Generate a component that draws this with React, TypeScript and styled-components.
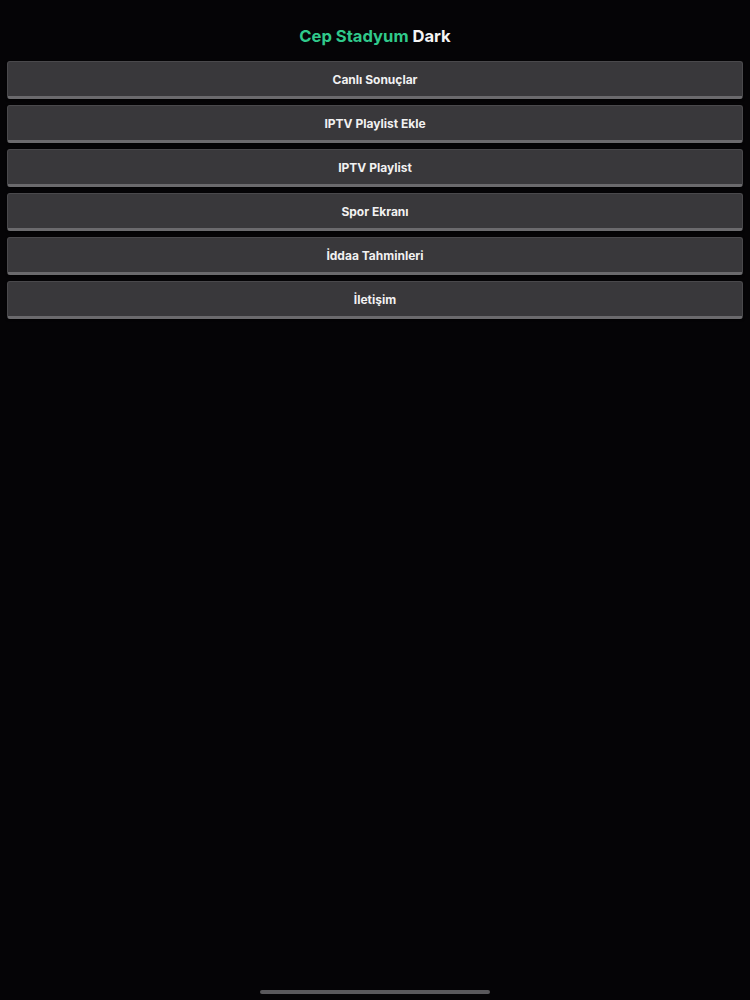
import * as React from "react";
import styled, { createGlobalStyle } from "styled-components";

const GlobalStyle = createGlobalStyle`
  html, body {
    margin: 0;
    padding: 0;
    background: #050406;
  }
  body {
    font-family: Inter, "Noto Sans", "Liberation Sans", sans-serif;
    color: #f2f2f2;
  }
`;

const menuItems = [
  "Canlı Sonuçlar",
  "IPTV Playlist Ekle",
  "IPTV Playlist",
  "Spor Ekranı",
  "İddaa Tahminleri",
  "İletişim",
];

const Screen = styled.div`
  position: relative;
  width: 750px;
  height: 1000px;
  background: #050406;
  display: flex;
  flex-direction: column;
  overflow: hidden;
`;

const Header = styled.div`
  height: 61px;
  display: flex;
  align-items: center;
  justify-content: center;
  padding-top: 11px;
  box-sizing: border-box;
`;

const Title = styled.h1`
  margin: 0;
  font-size: 16.6px;
  font-weight: 700;
  color: #f4f4f4;
`;

const Accent = styled.span`
  color: #30c98b;
`;

const MenuList = styled.div`
  display: flex;
  flex-direction: column;
  gap: 6px;
  padding: 0 7px;
`;

const MenuButton = styled.button`
  height: 38px;
  width: 100%;
  box-sizing: border-box;
  background: #39383b;
  border: 1px solid #4a494c;
  border-bottom: 3px solid #6b6a6d;
  border-radius: 3px;
  box-shadow: 0 1px 2px rgba(0, 0, 0, 0.6);
  color: #f1f1f1;
  font-family: Inter, "Noto Sans", "Liberation Sans", sans-serif;
  font-size: 12px;
  font-weight: 700;
  display: flex;
  align-items: center;
  justify-content: center;
  padding: 0;
  cursor: pointer;
`;

const HomeIndicator = styled.div`
  position: absolute;
  left: 260px;
  bottom: 6px;
  width: 230px;
  height: 4px;
  border-radius: 2px;
  background: #5a595c;
`;

export default function App() {
  return (
    <>
      <GlobalStyle />
      <Screen>
        <Header>
          <Title>
            <Accent>Cep Stadyum</Accent> Dark
          </Title>
        </Header>
        <MenuList>
          {menuItems.map((item) => (
            <MenuButton key={item}>{item}</MenuButton>
          ))}
        </MenuList>
        <HomeIndicator />
      </Screen>
    </>
  );
}
